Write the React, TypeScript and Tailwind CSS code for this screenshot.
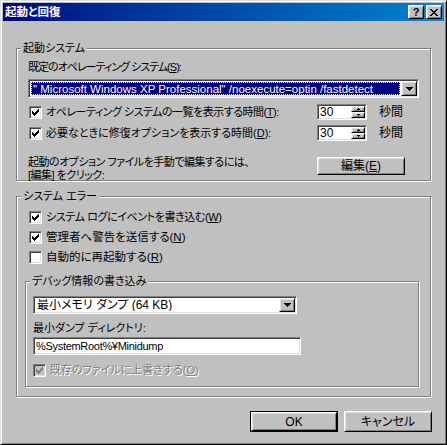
import React from "react";

// classic 3D edges
const sunken =
  "border border-t-[#808080] border-l-[#808080] border-b-white border-r-white shadow-[inset_1px_1px_0_#404040,inset_-1px_-1px_0_#dfdfdf]";
const raised =
  "border border-t-white border-l-white border-b-black border-r-black shadow-[inset_1px_1px_0_#dfdfdf,inset_-1px_-1px_0_#808080]";

const checkRows = ["......x", ".....xx", "x...xxx", "xx.xxx.", "xxxxx..", ".xxx...", "..x...."];
const closeRows = ["xx....xx", ".xx..xx.", "..xxxx..", "...xx...", "..xxxx..", ".xx..xx.", "xx....xx"];
const arrowRows = ["xxxxxxx", ".xxxxx.", "..xxx..", "...x..."];
const upRows = [".x.", "xxx"];
const downRows = ["xxx", ".x."];

function Pixels({ rows, color }: { rows: string[]; color: string }) {
  return (
    <svg width={rows[0].length} height={rows.length} shapeRendering="crispEdges" className="block">
      {rows.flatMap((r, y) =>
        [...r].map((c, x) =>
          c === "x" ? <rect key={`${x}-${y}`} x={x} y={y} width={1} height={1} fill={color} /> : null
        )
      )}
    </svg>
  );
}

function Check({ checked, disabled }: { checked?: boolean; disabled?: boolean }) {
  return (
    <span
      className={`w-[13px] h-[13px] shrink-0 flex items-center justify-center ${sunken} ${
        disabled ? "bg-[#c0c0c0]" : "bg-white"
      }`}
    >
      {checked && <Pixels rows={checkRows} color={disabled ? "#808080" : "#000"} />}
    </span>
  );
}

function GroupBox({
  label,
  className,
  children,
}: {
  label: string;
  className: string;
  children: React.ReactNode;
}) {
  return (
    <div className={`relative border border-[#808080] shadow-[inset_1px_1px_0_#fff,1px_1px_0_#fff] ${className}`}>
      <span className="absolute -top-[8px] left-[4px] bg-[#c0c0c0] px-[2px] leading-[14px]">{label}</span>
      {children}
    </div>
  );
}

function Combo({
  text,
  selected,
  className,
  textClass,
}: {
  text: string;
  selected?: boolean;
  className: string;
  textClass: string;
}) {
  return (
    <div className={`${sunken} p-[1px] bg-white flex ${className}`}>
      <div className="flex-1 min-w-0 p-[1px] flex">
        <div
          className={`flex-1 flex items-center pl-[1px] whitespace-nowrap overflow-hidden ${textClass} ${
            selected ? "bg-[#000080] text-white border border-dotted border-[#ffff80]" : ""
          }`}
        >
          {text}
        </div>
      </div>
      <div className={`w-[16px] bg-[#c0c0c0] flex items-center justify-center ${raised}`}>
        <Pixels rows={arrowRows} color="#000" />
      </div>
    </div>
  );
}

function Spin({ value }: { value: string }) {
  return (
    <div className={`w-[50px] h-[16px] p-[1px] bg-white flex ${sunken}`}>
      <div className="flex-1 pl-[1px] flex items-center leading-[12px] text-[12px]">{value}</div>
      <div className="w-[14px] flex flex-col">
        <div className={`h-[6px] bg-[#c0c0c0] flex items-center justify-center ${raised}`}>
          <Pixels rows={upRows} color="#000" />
        </div>
        <div className={`h-[6px] bg-[#c0c0c0] flex items-center justify-center ${raised}`}>
          <Pixels rows={downRows} color="#000" />
        </div>
      </div>
    </div>
  );
}

function Button({ children, className }: { children: React.ReactNode; className: string }) {
  return (
    <div className={`bg-[#c0c0c0] flex items-center justify-center ${raised} ${className}`}>{children}</div>
  );
}

export default function App() {
  return (
    <div className="w-[447px] h-[445px] bg-[#c0c0c0] border border-t-[#dfdfdf] border-l-[#dfdfdf] border-b-black border-r-black shadow-[inset_1px_1px_0_#fff,inset_-1px_-1px_0_#808080] p-[2px] flex flex-col text-[11px] leading-[14px] text-black [font-family:'Liberation_Sans','Noto_Sans_CJK_JP',sans-serif] [font-feature-settings:'palt'] select-none">
      {/* Title bar */}
      <div className="h-[18px] shrink-0 flex items-center bg-linear-to-r from-[#000080] to-[#1084d0] pl-[2px] pr-[2px]">
        <span className="flex-1 text-white font-bold text-[11.5px]">起動と回復</span>
        <div className={`w-[16px] h-[14px] bg-[#c0c0c0] flex items-center justify-center font-bold text-[11px] leading-[11px] ${raised}`}>
          ?
        </div>
        <div className={`w-[16px] h-[14px] ml-[2px] bg-[#c0c0c0] flex items-center justify-center ${raised}`}>
          <Pixels rows={closeRows} color="#000" />
        </div>
      </div>

      <div className="px-[13px]">
        {/* 起動システム */}
        <GroupBox label="起動システム" className="mt-[27px] h-[133px]">
          <div className="pt-[11px] pl-[11px] w-[402px]">
            <div className="h-[14px] tracking-[-1px]">
              既定のオペレーティング システム(<u>S</u>):
            </div>
            <Combo
              selected
              className="mt-[5px] w-[391px] h-[19px]"
              textClass="text-[11.5px]"
              text={'" Microsoft Windows XP Professional" /noexecute=optin /fastdetect'}
            />
            <div className="mt-[6px] h-[16px] w-[391px] flex items-center">
              <span className="ml-[1px]">
                <Check checked />
              </span>
              <span className="ml-[4px] flex-1 tracking-[-0.5px]">
                オペレーティング システムの一覧を表示する時間(<u>T</u>):
              </span>
              <Spin value="30" />
              <span className="ml-[12px] w-[40px] text-[12px]">秒間</span>
            </div>
            <div className="mt-[5px] h-[16px] w-[391px] flex items-center">
              <span className="ml-[1px]">
                <Check checked />
              </span>
              <span className="ml-[4px] flex-1">
                必要なときに修復オプションを表示する時間(<u>D</u>):
              </span>
              <Spin value="30" />
              <span className="ml-[12px] w-[40px] text-[12px]">秒間</span>
            </div>
            <div className="mt-[15px] w-[391px] flex items-start">
              <div className="flex-1 leading-[13px] tracking-[-0.5px]">
                起動のオプション ファイルを手動で編集するには、
                <br />
                [編集] をクリック:
              </div>
              <Button className="mt-[1px] mr-[14px] w-[88px] h-[18px] text-[12px]">
                編集(<u>E</u>)
              </Button>
            </div>
          </div>
        </GroupBox>

        {/* システム エラー */}
        <GroupBox label="システム エラー" className="mt-[15px] h-[201px]">
          <div className="pt-[12px] flex flex-col gap-[4px]">
            <div className="ml-[12px] h-[16px] flex items-center">
              <Check checked />
              <span className="ml-[4px] tracking-[-0.4px]">
                システム ログにイベントを書き込む(<u>W</u>)
              </span>
            </div>
            <div className="ml-[12px] h-[16px] flex items-center">
              <Check checked />
              <span className="ml-[4px] text-[11.5px]">
                管理者へ警告を送信する(<u>N</u>)
              </span>
            </div>
            <div className="ml-[12px] h-[16px] flex items-center">
              <Check />
              <span className="ml-[4px] text-[11.5px]">
                自動的に再起動する(<u>R</u>)
              </span>
            </div>
          </div>

          <GroupBox label="デバッグ情報の書き込み" className="mt-[16px] ml-[8px] w-[394px] h-[106px]">
            <div className="pt-[14px] pl-[7px]">
              <Combo className="w-[264px] h-[18px]" textClass="text-[12px]" text="最小メモリ ダンプ (64 KB)" />
              <div className="mt-[7px] h-[14px]">最小ダンプ ディレクトリ:</div>
              <div className={`mt-[2px] w-[268px] h-[18px] p-[1px] bg-white flex items-center ${sunken}`}>
                <span className="pl-[1px] tracking-[-0.3px]">%SystemRoot%¥Minidump</span>
              </div>
              <div className="mt-[7px] h-[16px] flex items-center">
                <Check checked disabled />
                <span className="ml-[4px] text-[#808080] [text-shadow:1px_1px_0_#fff]">
                  既存のファイルに上書きする(<u>O</u>)
                </span>
              </div>
            </div>
          </GroupBox>
        </GroupBox>
      </div>

      {/* Dialog buttons */}
      <div className="mt-[14px] pr-[12px] flex justify-end gap-[6px] text-[12px]">
        <div className="w-[88px] h-[21px] border border-black flex">
          <Button className="flex-1">OK</Button>
        </div>
        <Button className="w-[88px] h-[21px]">キャンセル</Button>
      </div>
    </div>
  );
}
